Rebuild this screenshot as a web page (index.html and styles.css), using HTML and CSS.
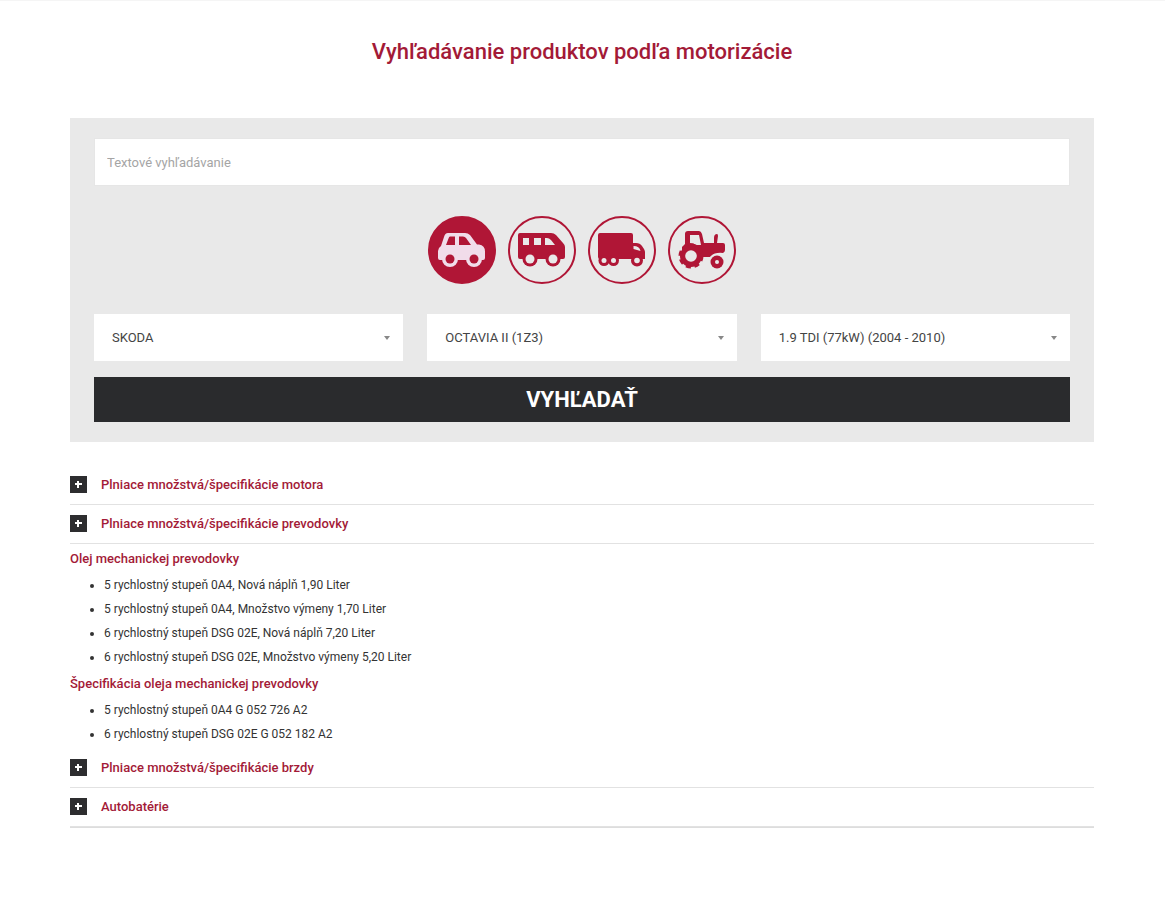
FILE: index.html
```html
<!DOCTYPE html>
<html lang="sk">
<head>
    <meta charset="UTF-8">
    <meta name="viewport" content="width=device-width, initial-scale=1.0">
    <title>Vyhľadávanie produktov podľa motorizácie</title>
    <link rel="stylesheet" href="styles.css">
</head>

<body>

    <main class="container">
        <h1>Vyhľadávanie produktov podľa motorizácie</h1>

        <form class="search">
            <input type="text" class="search-text" placeholder="Textové vyhľadávanie" aria-label="Textové vyhľadávanie">

            <div class="vehicles">
                <label class="vehicle">
                    <input type="radio" name="vehicle" value="car" aria-label="Osobné auto" checked>
                    <svg viewBox="0 0 68 68" aria-hidden="true">
                        <path class="icon" fill-rule="evenodd" d="M20 17h17q3 0 5 2l7 9.500h2q6 1 6 7V42q0 2-2 2H12q-2 0-2-2v-7q0-3 3-5l3-9q1-4 4-4zM22 20.500q-1 0-1.500 2L18 29h9v-8.500zM31 20.500V29h12l-5-7q-1-1.500-3-1.500z"/>
                        <circle class="icon" cx="22" cy="43" r="8"/>
                        <circle class="icon" cx="46" cy="43" r="8"/>
                        <circle class="hole" cx="22" cy="43" r="4.500"/>
                        <circle class="hole" cx="46" cy="43" r="4.500"/>
                    </svg>
                </label>
                <label class="vehicle">
                    <input type="radio" name="vehicle" value="van" aria-label="Dodávka">
                    <svg viewBox="0 0 68 68" aria-hidden="true">
                        <path class="icon" fill-rule="evenodd" d="M12 17h31q3 0 5 2l7 8q2 2 2 4v10q0 2-2 2H12q-2 0-2-2V19q0-2 2-2zM15 22v7h6v-7zM26 22v7h7v-7zM37 22v7h10l-4-5q-2-2-4-2z"/>
                        <circle class="icon" cx="22" cy="43" r="7.500"/>
                        <circle class="icon" cx="45" cy="43" r="7.500"/>
                        <circle class="hole" cx="22" cy="43" r="4.500"/>
                        <circle class="hole" cx="45" cy="43" r="4.500"/>
                    </svg>
                </label>
                <label class="vehicle">
                    <input type="radio" name="vehicle" value="truck" aria-label="Nákladné auto">
                    <svg viewBox="0 0 68 68" aria-hidden="true">
                        <path class="icon" fill-rule="evenodd" d="M12 17h31q2 0 2 2v8h3q4 0 6 3l2 3q1 2 1 3v7H12q-2 0-2-2V19q0-2 2-2zM45.500 30v3l7 2q-1-5-7-5z"/>
                        <circle class="icon" cx="16" cy="44.500" r="5.500"/>
                        <circle class="icon" cx="25.500" cy="44.500" r="5.500"/>
                        <circle class="icon" cx="49" cy="44.500" r="6"/>
                        <circle class="hole" cx="16" cy="44.500" r="2.500"/>
                        <circle class="hole" cx="25.500" cy="44.500" r="2.500"/>
                        <circle class="hole" cx="49" cy="44.500" r="2.800"/>
                    </svg>
                </label>
                <label class="vehicle">
                    <input type="radio" name="vehicle" value="tractor" aria-label="Traktor">
                    <svg viewBox="0 0 68 68" aria-hidden="true">
                        <path class="icon" fill-rule="evenodd" d="M20 15h11q2 0 3 3l2 9h10v-5q0-4 3-4 1 0 1 2l-1 7h6q2 0 2 2v5q0 2-2 3-9-1-13 4H22V34h-8v-3l3-3V18q0-3 3-3zM22 19v8q4 0 6 2h5l-2-10z"/>
                        <circle class="icon" cx="23" cy="40" r="11"/>
                        <circle class="tread" cx="23" cy="40" r="11"/>
                        <circle class="hole" cx="23" cy="40" r="5.800"/>
                        <circle class="hole" cx="49" cy="46" r="8"/>
                        <circle class="icon" cx="49" cy="46" r="6.500"/>
                        <circle class="hole" cx="49" cy="46" r="2"/>
                    </svg>
                </label>
            </div>

            <div class="selects">
                <select aria-label="Značka">
                    <option>SKODA</option>
                </select>
                <select aria-label="Model">
                    <option>OCTAVIA II (1Z3)</option>
                </select>
                <select aria-label="Motor">
                    <option>1.9 TDI (77kW) (2004 - 2010)</option>
                </select>
            </div>

            <button type="submit">VYHĽADAŤ</button>
        </form>

        <div class="accordion">
            <details>
                <summary>Plniace množstvá/špecifikácie motora</summary>
            </details>
            <details open>
                <summary>Plniace množstvá/špecifikácie prevodovky</summary>
                <div class="specs">
                    <h2>Olej mechanickej prevodovky</h2>
                    <ul>
                        <li>5 rychlostný stupeň 0A4, Nová náplň 1,90 Liter</li>
                        <li>5 rychlostný stupeň 0A4, Množstvo výmeny 1,70 Liter</li>
                        <li>6 rychlostný stupeň DSG 02E, Nová náplň 7,20 Liter</li>
                        <li>6 rychlostný stupeň DSG 02E, Množstvo výmeny 5,20 Liter</li>
                    </ul>
                    <h2>Špecifikácia oleja mechanickej prevodovky</h2>
                    <ul>
                        <li>5 rychlostný stupeň 0A4 G 052 726 A2</li>
                        <li>6 rychlostný stupeň DSG 02E G 052 182 A2</li>
                    </ul>
                </div>
            </details>
            <details>
                <summary>Plniace množstvá/špecifikácie brzdy</summary>
            </details>
            <details>
                <summary>Autobatérie</summary>
            </details>
        </div>
    </main>

</body>
</html>
```
FILE: styles.css
```css
* {
    box-sizing: border-box;
}

body {
    margin: 0;
    font-family: Roboto, "Liberation Sans", sans-serif;
    font-size: 12px;
    color: #333;
    background-color: #fff;
    border-top: 1px solid #f5f5f5;
}

.container {
    max-width: 1164px;
    padding: 0 70px;
}

h1 {
    margin: 0;
    padding: 35px 0 50px;
    font-size: 22px;
    font-weight: 500;
    line-height: 32px;
    text-align: center;
    color: #a31a37;
}

/* Vyhľadávací panel */
.search {
    padding: 20px 24px;
    background-color: #e9e9e9;
}

.search-text {
    display: block;
    width: 100%;
    height: 48px;
    padding: 0 12px;
    border: 1px solid #e6e6e6;
    background-color: #fff;
    font-family: inherit;
    font-size: 13px;
    color: #444;
}

    .search-text::placeholder {
        color: #a5a5a5;
    }

.vehicles {
    display: flex;
    justify-content: center;
    gap: 12px;
    padding: 30px 0;
}

.vehicle {
    width: 68px;
    height: 68px;
    border: 2px solid #b01636;
    border-radius: 50%;
    cursor: pointer;
}

    .vehicle input {
        position: absolute;
        opacity: 0;
    }

    .vehicle svg {
        display: block;
        margin: -2px;
    }

.icon {
    fill: #b01636;
}

.hole {
    fill: #e9e9e9;
}

/* Dezén zadného kolesa */
.tread {
    fill: none;
    stroke: #b01636;
    stroke-width: 3;
    stroke-dasharray: 5 3.64;
}

.vehicle:has(input:checked) {
    background-color: #b01636;
}

    .vehicle:has(input:checked) .icon {
        fill: #f1dcea;
    }

    .vehicle:has(input:checked) .hole {
        fill: #b01636;
    }

.selects {
    display: grid;
    grid-template-columns: repeat(3, 1fr);
    gap: 24px;
    margin-bottom: 16px;
}

select {
    height: 47px;
    padding: 0 18px;
    border: none;
    border-radius: 0;
    appearance: none;
    background: #fff url("data:image/svg+xml,%3Csvg xmlns='http://www.w3.org/2000/svg' width='6' height='4'%3E%3Cpath d='M0 0h6L3 4z' fill='%23888'/%3E%3C/svg%3E") no-repeat right 13px center;
    font-family: inherit;
    font-size: 13px;
    color: #444;
}

.search button {
    display: block;
    width: 100%;
    height: 45px;
    border: none;
    background-color: #2a2b2d;
    font-family: inherit;
    font-size: 22px;
    font-weight: bold;
    color: #fff;
    cursor: pointer;
}

/* Rozbaľovacie sekcie */
.accordion {
    margin-top: 24px;
    border-bottom: 1px solid #ddd;
}

summary {
    display: flex;
    align-items: center;
    gap: 14px;
    height: 39px;
    padding-bottom: 2px;
    border-bottom: 1px solid #e2e2e2;
    font-size: 13px;
    font-weight: 500;
    color: #a31a37;
    cursor: pointer;
}

    summary::before {
        content: "";
        width: 17px;
        height: 17px;
        background:
            linear-gradient(#fff, #fff) 5px 7px / 7px 2px no-repeat,
            linear-gradient(#fff, #fff) 7px 5px / 2px 7px no-repeat,
            #2d2d2f;
    }

.specs {
    padding-bottom: 3px;
}

h2 {
    margin: 0;
    font-size: 13px;
    font-weight: 500;
    line-height: 29px;
    color: #a31a37;
}

ul {
    margin: 0;
    padding-left: 34px;
}

li {
    line-height: 24px;
}
```
